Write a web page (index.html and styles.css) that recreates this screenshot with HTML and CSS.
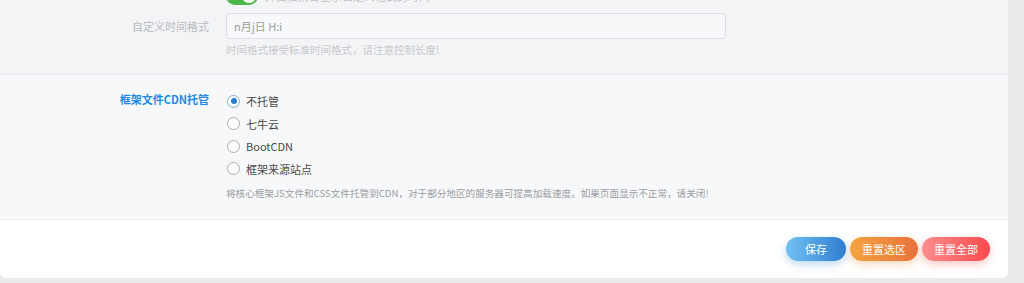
FILE: index.html
```html
<!DOCTYPE html>
<html lang="zh-CN">
<head>
  <meta charset="UTF-8">
  <title>系统设置</title>
  <link rel="stylesheet" href="styles.css">
</head>
<body>
  <div class="panel">
    <!-- 时间格式 -->
    <div class="section section-muted">
      <div class="row">
        <div class="label"></div>
        <div class="content">
          <div class="switch-line">
            <span class="switch"><span class="knob"></span></span>
            <span class="switch-text">开启后前台显示自定义格式的时间</span>
          </div>
        </div>
      </div>
      <div class="row row-input">
        <div class="label label-muted">自定义时间格式</div>
        <div class="content">
          <input class="text-input" type="text" value="n月j日 H:i">
          <p class="hint">时间格式接受标准时间格式，请注意控制长度!</p>
        </div>
      </div>
    </div>

    <!-- CDN -->
    <div class="section section-light">
      <div class="row">
        <div class="label label-active">框架文件CDN托管</div>
        <div class="content">
          <label class="radio"><span class="dot checked"></span>不托管</label>
          <label class="radio"><span class="dot"></span>七牛云</label>
          <label class="radio"><span class="dot"></span>BootCDN</label>
          <label class="radio"><span class="dot"></span>框架来源站点</label>
          <p class="hint hint-cdn">将核心框架JS文件和CSS文件托管到CDN，对于部分地区的服务器可提高加载速度。如果页面显示不正常，请关闭!</p>
        </div>
      </div>
    </div>

    <div class="footer">
      <button class="btn btn-blue">保存</button>
      <button class="btn btn-orange">重置选区</button>
      <button class="btn btn-red">重置全部</button>
    </div>
  </div>
</body>
</html>
```

FILE: styles.css
```css
* { box-sizing: border-box; margin: 0; padding: 0; }
body {
  background-color: #ebebeb;
  font-family: "Noto Sans CJK SC", "Noto Sans", sans-serif;
  font-size: 11px;
  color: #555;
  height: 283px;
  overflow: hidden;
}
.panel {
  width: 1008px;
  margin-top: -22px;
  background-color: #fff;
  border-radius: 0 0 6px 6px;
  overflow: hidden;
}

.section { border-bottom: 1px solid #eceef1; }
.section-muted {
  background-color: #f3f4f6;
  padding: 9px 0 16px;
}
.section-light {
  background-color: #f7f8fa;
  padding: 15px 0 18px;
}

.row {
  display: grid;
  grid-template-columns: 209px 1fr;
  column-gap: 17px;
}
.row-input { margin-top: 8px; }
.label {
  text-align: right;
  line-height: 18px;
}
.label-muted {
  color: #b9bcc0;
  line-height: 26px;
}
.label-active {
  color: #1e88e5;
  font-weight: bold;
}

.switch-line {
  display: flex;
  align-items: center;
  gap: 7px;
  height: 18px;
}
.switch {
  position: relative;
  width: 32px;
  height: 18px;
  border-radius: 9px;
  background-color: #4cb84c;
}
.switch .knob {
  position: absolute;
  top: 2px;
  right: 2px;
  width: 14px;
  height: 14px;
  border-radius: 50%;
  background-color: #fff;
}
.switch-text { color: #c4c6ca; }

.text-input {
  width: 500px;
  height: 26px;
  padding: 0 7px;
  border: 1px solid #dcdee2;
  border-radius: 4px;
  background-color: #f7f8f9;
  color: #9a9da2;
  font-family: inherit;
  font-size: 11px;
  outline: none;
}

.hint {
  margin-top: 3px;
  line-height: 16px;
  font-size: 10.5px;
  color: #c8cacd;
}
.hint-cdn {
  margin-top: 5px;
  font-size: 9.6px;
  color: #9a9da2;
}

.radio {
  display: flex;
  align-items: center;
  gap: 6px;
  height: 22.5px;
  color: #4a4a4a;
}
.dot {
  width: 13px;
  height: 13px;
  margin-left: 1px;
  border: 1px solid #a9adb2;
  border-radius: 50%;
  background-color: #fff;
  position: relative;
}
.dot.checked { border-color: #8ab0d8; }
.dot.checked::after {
  content: "";
  position: absolute;
  top: 2.5px;
  left: 2.5px;
  width: 6px;
  height: 6px;
  border-radius: 50%;
  background-color: #2a7ccf;
}

.footer {
  display: flex;
  justify-content: flex-end;
  gap: 4px;
  padding: 17px 18px 17px 0;
}
.btn {
  height: 24px;
  width: 68px;
  border: none;
  border-radius: 12px;
  color: #fff;
  font-family: inherit;
  font-size: 11px;
  cursor: pointer;
}
.btn-blue {
  width: 60px;
  background: linear-gradient(to right, #72c0f3, #2f7ecf);
  box-shadow: 0 3px 8px rgba(60, 140, 220, 0.35);
}
.btn-orange {
  background: linear-gradient(to right, #f4a440, #e8723c);
  box-shadow: 0 3px 8px rgba(235, 140, 60, 0.35);
}
.btn-red {
  background: linear-gradient(to right, #ff8d8d, #ff4a4e);
  box-shadow: 0 3px 8px rgba(255, 90, 90, 0.35);
}
```
